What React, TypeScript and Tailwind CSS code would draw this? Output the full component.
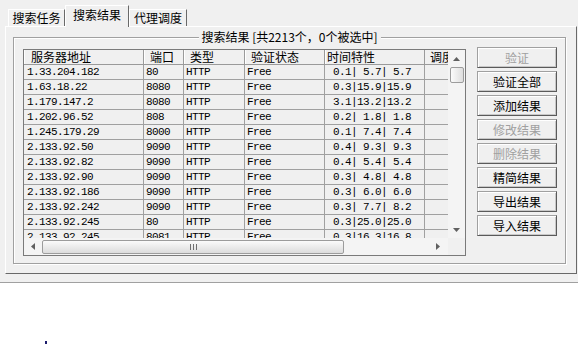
const cjk = "font-['Noto_Sans_CJK_SC',sans-serif]";
const mono = "font-['Liberation_Mono','Noto_Sans_CJK_SC',monospace] text-[11px] tracking-[-0.6px]";

const rows = [
  ["1.33.204.182", "80", " 0.1| 5.7| 5.7"],
  ["1.63.18.22", "8080", " 0.3|15.9|15.9"],
  ["1.179.147.2", "8080", " 3.1|13.2|13.2"],
  ["1.202.96.52", "808", " 0.2| 1.8| 1.8"],
  ["1.245.179.29", "8000", " 0.1| 7.4| 7.4"],
  ["2.133.92.50", "9090", " 0.4| 9.3| 9.3"],
  ["2.133.92.82", "9090", " 0.4| 5.4| 5.4"],
  ["2.133.92.90", "9090", " 0.3| 4.8| 4.8"],
  ["2.133.92.186", "9090", " 0.3| 6.0| 6.0"],
  ["2.133.92.242", "9090", " 0.3| 7.7| 8.2"],
  ["2.133.92.245", "80", " 0.3|25.0|25.0"],
  ["2.133.92.245", "8081", " 0.3|16.3|16.8"],
];

const buttons = [
  { label: "验证", disabled: true },
  { label: "验证全部" },
  { label: "添加结果" },
  { label: "修改结果", disabled: true },
  { label: "删除结果", disabled: true },
  { label: "精简结果" },
  { label: "导出结果" },
  { label: "导入结果" },
];

function Arrow({ dir }: { dir: "up" | "down" | "left" | "right" }) {
  const pts = {
    up: "0,4 3.5,0 7,4",
    down: "0,0 3.5,4 7,0",
    left: "4,0 0,3.5 4,7",
    right: "0,0 4,3.5 0,7",
  }[dir];
  const vertical = dir === "up" || dir === "down";
  return (
    <svg width={vertical ? 7 : 4} height={vertical ? 4 : 7} viewBox={vertical ? "0 0 7 4" : "0 0 4 7"}>
      <polygon points={pts} fill="#606060" />
    </svg>
  );
}

function Tab({ label, active, w }: { label: string; active?: boolean; w: string }) {
  return (
    <div
      className={`${w} flex items-center justify-center border-l border-t border-r border-l-white border-t-white border-r-[#696969] bg-[#f0f0f0] ${
        active ? "relative z-10 -mb-[1px] h-[22px] pb-[3px]" : "h-[17px]"
      }`}
    >
      <span className="leading-[14px]">{label}</span>
    </div>
  );
}

export default function App() {
  return (
    <div className={`relative h-[344px] w-[578px] overflow-hidden bg-white text-[12px] text-black ${cjk}`}>
      <div className="h-[283px] border-b border-[#a0a0a0] bg-[#f0f0f0] pl-[5px] pr-[1px] pt-[5px]">
        <div className="flex h-[21px] items-end pl-[3px]">
          <Tab label="搜索任务" w="w-[57px]" />
          <Tab label="搜索结果" w="w-[64px]" active />
          <Tab label="代理调度" w="w-[58px]" />
        </div>

        <div className="h-[248px] border border-b-[#696969] border-l-white border-r-[#696969] border-t-white pb-[9px] pl-[7px] pr-[10px] pt-[10px]">
          <div className="relative h-full border border-[#a0a0a0] shadow-[inset_1px_1px_0_#fff,1px_1px_0_#fff]">
            <div className="absolute -top-[8px] left-1/2 -translate-x-1/2 whitespace-nowrap bg-[#f0f0f0] px-[3px] leading-[14px]">
              搜索结果 [共2213个，0个被选中]
            </div>

            <div className="flex pl-[9px] pt-[9px]">
              <div className="mt-[2px] flex h-[207px] w-[443px] flex-col border border-[#7a7a7a] bg-[#f0f0f0]">
                <div className="flex h-[188px]">
                  <div className="w-[424px] overflow-hidden">
                    <div className="flex h-[15px] whitespace-nowrap leading-[14px]">
                      <div className="w-[120px] shrink-0 border-b border-r border-[#9a9a9a] pl-[7px] shadow-[inset_1px_0_0_#fff]">服务器地址</div>
                      <div className="w-[40px] shrink-0 border-b border-r border-[#9a9a9a] pl-[6px] shadow-[inset_1px_0_0_#fff]">端口</div>
                      <div className="w-[61px] shrink-0 border-b border-r border-[#9a9a9a] pl-[6px] shadow-[inset_1px_0_0_#fff]">类型</div>
                      <div className="w-[80px] shrink-0 border-b border-r border-[#9a9a9a] pl-[6px] shadow-[inset_1px_0_0_#fff]">验证状态</div>
                      <div className="w-[100px] shrink-0 border-b border-r border-[#9a9a9a] pl-[2px] shadow-[inset_1px_0_0_#fff]">时间特性</div>
                      <div className="w-[40px] shrink-0 border-b border-[#9a9a9a] pl-[5px]">调度</div>
                    </div>
                    {rows.map(([ip, port, time], i) => (
                      <div key={i} className={`flex h-[15px] whitespace-pre leading-[14px] ${mono}`}>
                        <div className="w-[120px] shrink-0 border-b border-r border-[#a0a0a0] pl-[3px]">{ip}</div>
                        <div className="w-[40px] shrink-0 border-b border-r border-[#a0a0a0] pl-[2px]">{port}</div>
                        <div className="w-[61px] shrink-0 border-b border-r border-[#a0a0a0] pl-[2px]">HTTP</div>
                        <div className="w-[80px] shrink-0 border-b border-r border-[#a0a0a0] pl-[2px]">Free</div>
                        <div className="w-[100px] shrink-0 border-b border-r border-[#a0a0a0] pl-[2px]">{time}</div>
                        <div className="w-[40px] shrink-0 border-b border-[#a0a0a0]" />
                      </div>
                    ))}
                  </div>

                  <div className="flex w-[17px] flex-col items-center bg-[#f4f4f4]">
                    <div className="flex h-[17px] items-center justify-center">
                      <Arrow dir="up" />
                    </div>
                    <div className="h-[16px] w-[14px] rounded-[2px] border border-[#9c9c9c] bg-gradient-to-r from-[#fbfbfb] to-[#dedede]" />
                    <div className="flex-1" />
                    <div className="flex h-[17px] items-center justify-center">
                      <Arrow dir="down" />
                    </div>
                  </div>
                </div>

                <div className="flex h-[17px]">
                  <div className="flex w-[424px] items-center bg-[#f4f4f4]">
                    <div className="flex w-[18px] justify-center">
                      <Arrow dir="left" />
                    </div>
                    <div className="flex h-[14px] w-[302px] items-center justify-center rounded-[2px] border border-[#9c9c9c] bg-gradient-to-b from-[#fbfbfb] to-[#dcdcdc]">
                      <div className="flex gap-[2px]">
                        <div className="h-[6px] w-px bg-[#707070]" />
                        <div className="h-[6px] w-px bg-[#707070]" />
                        <div className="h-[6px] w-px bg-[#707070]" />
                      </div>
                    </div>
                    <div className="flex-1" />
                    <div className="flex w-[20px] justify-center">
                      <Arrow dir="right" />
                    </div>
                  </div>
                  <div className="w-[17px] bg-[#f0f0f0]" />
                </div>
              </div>

              <div className="ml-[11px] flex w-[80px] flex-col gap-[3px]">
                {buttons.map((b) => (
                  <div
                    key={b.label}
                    className={`flex h-[21px] items-center justify-center border border-[#a0a0a0] border-b-[#5a5a5a] border-r-[#5a5a5a] bg-[#f0f0f0] leading-[14px] shadow-[inset_1px_1px_0_#fff,inset_-1px_-1px_0_#c8c8c8] ${
                      b.disabled ? "text-[#a0a0a0]" : "text-black"
                    }`}
                  >
                    {b.label}
                  </div>
                ))}
              </div>
            </div>
          </div>
        </div>
      </div>
      <div className="absolute left-[45px] top-[341px] h-[3px] w-[2px] bg-[#1c1c6c]" />
    </div>
  );
}
